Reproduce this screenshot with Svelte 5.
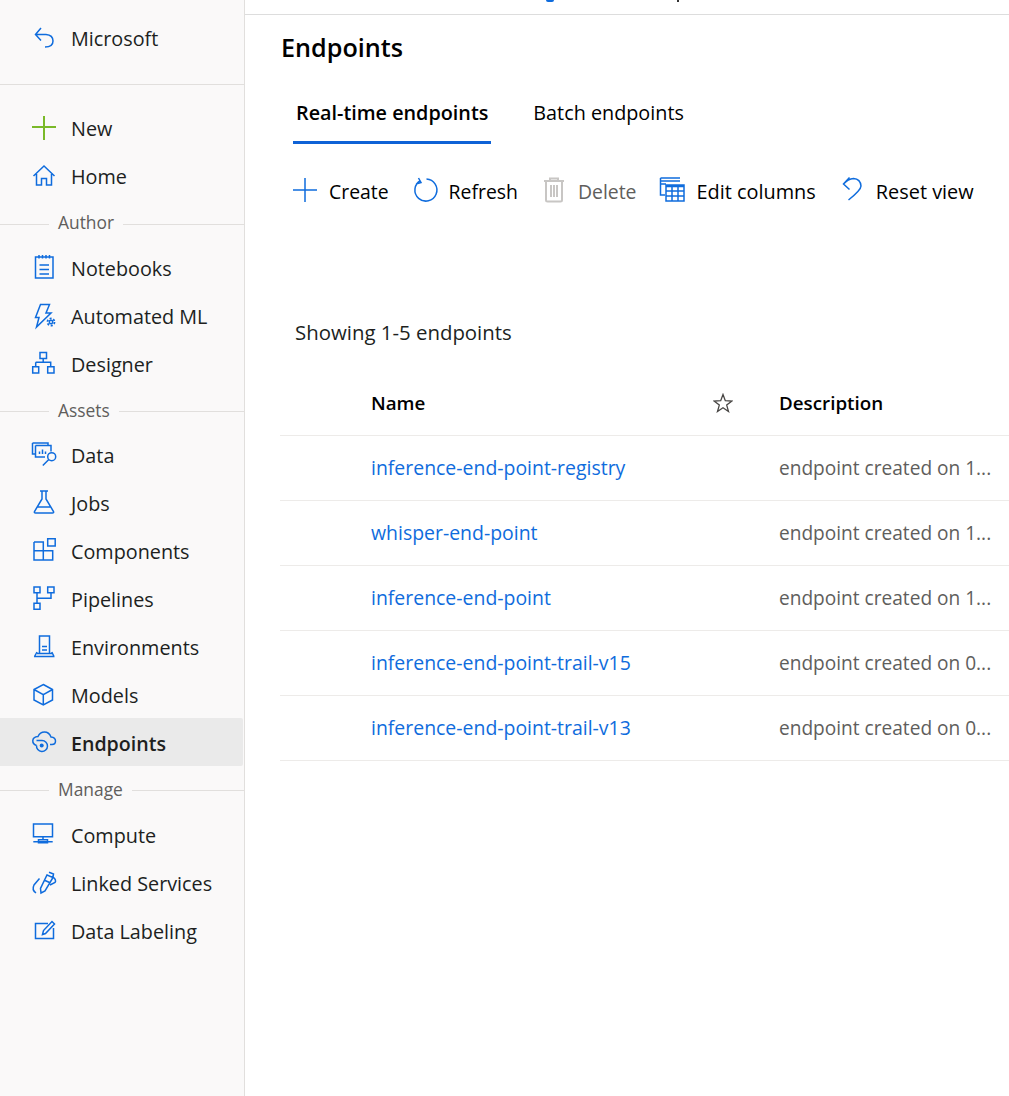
<script lang="ts">
	const groups = [
		{ label: 'Author', h: 44, items: ['Notebooks', 'Automated ML', 'Designer'] },
		{ label: 'Assets', h: 43, items: ['Data', 'Jobs', 'Components', 'Pipelines', 'Environments', 'Models', 'Endpoints'] },
		{ label: 'Manage', h: 45, items: ['Compute', 'Linked Services', 'Data Labeling'] }
	];

	const icons: Record<string, string> = {
		Home: 'M1.500 12 12 2l10.500 10M4.500 10v11h5v-6.500h5V21h5V10',
		Notebooks: 'M3.500 1h17.500v21H3.500zM7 -1v3.500M10.500 -1v3.500M14 -1v3.500M17.500 -1v3.500M7.500 9H17M7.500 13.500H17M7.500 18H17',
		'Automated ML': 'M8.500 .5h9L14 9h5L4.500 23 7 13.500H3.500z',
		Designer: 'M8 .5h6.500v6H8zM11.200 6.500v4M3.700 10.300h15v4.400M3.700 10.300v4.400M.7 14.700h6v6.300h-6zM15.700 14.700H22v6.300h-6.300z',
		Data: 'M.5 0H16v2M.5 0v11H3M3.500 2.500H19v6M3.500 2.500V14H13M7.500 11V8.500M10.500 11V6.500M13.500 11V8.500M16.800 16.500l-6 6',
		Jobs: 'M8 0h8M10 0v8L2.500 20.500Q2 22 3.500 22h17q1.500 0 1-1.500L14 8V0M5.500 16h13',
		Components: 'M2 3h9.300v18M2 3v18h18.700v-9.300H2M15.700 -.2h7.500V7h-7.500z',
		Pipelines: 'M2 0h6v5.700H2zM15.700 0H22v5.700h-6.300zM2 16.300h6v6H2zM5 5.700v10.600M5 11.300h14V5.700',
		Environments: 'M7.500 18V1h10v17M2 21.500h20.500M5 17 2.500 21.500M5 18.500h15M19.800 17l2.200 4.500M10 11.500h5M10 15h5',
		Models: 'M11.300 1.500 20.500 6.500V17l-9.200 5L2 17V6.500zM2 6.500l9.300 5.200 9.200-5.200M11.300 11.700V22',
		Compute: 'M1.500 1h19v12.700h-19zM11 13.700v3M6.500 16.700h9v3h-9zM1.300 18.700h19.400',
		'Linked Services': 'M15 4l6 2.500L13 20l-4 2-.5-4.500zM17 1.200 21.500 3 21 6.500M12 9l5.500 2.500M7.500 7.500 2 14Q-.5 19 4 22M20 5q5 4 3 6.500L18 14',
		'Data Labeling': 'M16 4.500H3.500v15h18V9M10.500 15.500l1-4L20 2.500 22.500 5l-9 9.500z'
	};

	const rows = [
		['inference-end-point-registry', 'endpoint created on 1...'],
		['whisper-end-point', 'endpoint created on 1...'],
		['inference-end-point', 'endpoint created on 1...'],
		['inference-end-point-trail-v15', 'endpoint created on 0...'],
		['inference-end-point-trail-v13', 'endpoint created on 0...']
	];
</script>

<div class="page">
	<aside class="side">
		<div class="back">
			<svg class="ico" viewBox="0 0 24 24"><path d="M9 2 3.500 8.500 9 14.500M3.500 8.500H14q7 .5 7 6.500t-8 6" /></svg>
			<span>Microsoft</span>
		</div>
		<div class="nav-row new">
			<svg class="ico" viewBox="0 0 24 24"><path class="plus" d="M12 0v24M0 11h24" /></svg>
			<span>New</span>
		</div>
		<div class="nav-row">
			<svg class="ico" viewBox="0 0 24 24"><path d={icons.Home} /></svg>
			<span>Home</span>
		</div>
		{#each groups as group}
			<div class="section" style="height: {group.h}px">
				<span>{group.label}</span>
			</div>
			{#each group.items as item}
				<div class="nav-row" class:active={item === 'Endpoints'}>
					{#if item === 'Endpoints'}
						<svg class="ico" viewBox="0 0 24 24">
							<path d="M4.500 14.500Q.5 13 .8 9.500T6 5.500Q8 1 12.500 1T19 6q4.500.5 4.500 4T20 13.500h-2M4.500 9.500H10a5.500 5.500 0 1 1-5.500 5" />
							<circle cx="9.700" cy="14.500" r="2" class="dot" />
						</svg>
					{:else}
						<svg class="ico" viewBox="0 0 24 24">
							<path d={icons[item]} />
							{#if item === 'Automated ML'}
								<circle cx="19" cy="18" r="1.700" />
								<circle cx="19" cy="18" r="3.500" class="gear" />
							{:else if item === 'Data'}
								<circle cx="19.700" cy="13.700" r="4" />
							{/if}
						</svg>
					{/if}
					<span>{item}</span>
				</div>
			{/each}
		{/each}
	</aside>

	<main class="main">
		<div class="crumbs"><i class="crumb-a"></i><i class="crumb-b"></i></div>
		<h1>Endpoints</h1>
		<div class="tabs">
			<div class="tab current">Real-time endpoints</div>
			<div class="tab">Batch endpoints</div>
		</div>
		<div class="toolbar">
			<div class="tool first">
				<svg viewBox="0 0 24 24"><path d="M12 0v24M0 12h24" /></svg>
				<span>Create</span>
			</div>
			<div class="tool">
				<svg viewBox="0 0 24 24"><path d="M7.500 2.500a11 11 0 1 0 6-1.400M5.500 0l2.500 4.500-5 1.500" /></svg>
				<span>Refresh</span>
			</div>
			<div class="tool off">
				<svg viewBox="0 0 24 24"><path d="M2 3h20M8 3V.5h8V3M4 3v19q0 1.500 1.500 1.500h13q1.500 0 1.500-1.500V3M9 7v12M12 7v12M15 7v12" /></svg>
				<span>Delete</span>
			</div>
			<div class="tool wide">
				<svg viewBox="0 0 24 24"><path d="M.5 0H20M.5 3H20M.5 6H6M.5 0v17H5M6 7h18v16H6zM6 8.500h18M6 13h18M6 18h18M12 7v16M18 7v16" /></svg>
				<span>Edit columns</span>
			</div>
			<div class="tool wide">
				<svg viewBox="0 0 24 24"><path d="M9.500 -.5 3.500 6l6 5.500M3.500 6Q8 1 13.500 .5 20.500 1 21 8q0 4-12.500 14" /></svg>
				<span>Reset view</span>
			</div>
		</div>
		<div class="count">Showing 1-5 endpoints</div>
		<div class="table">
			<div class="head">
				<span class="col-name">Name</span>
				<span class="col-star">
					<svg viewBox="0 0 20 20"><path d="M10 1.500 12.300 7.700 18.900 8 13.700 12.100 15.500 18.500 10 14.800 4.500 18.500 6.300 12.100 1.100 8 7.700 7.700Z" /></svg>
				</span>
				<span class="col-desc">Description</span>
			</div>
			{#each rows as row}
				<div class="row">
					<span class="col-name link">{row[0]}</span>
					<span class="col-star"></span>
					<span class="col-desc">{row[1]}</span>
				</div>
			{/each}
		</div>
	</main>
</div>

<style>
	:global(body) {
		margin: 0;
		overflow: hidden;
	}

	.page {
		display: flex;
		width: 1009px;
		height: 1096px;
		overflow: hidden;
		background: #fff;
		font-family: "Open Sans", "Noto Sans", sans-serif;
		font-size: 19.800px;
		color: #201f1e;
	}

	.side {
		width: 244px;
		flex-shrink: 0;
		background: #faf9f9;
		border-right: 1px solid #e1dfdd;
	}

	.back {
		display: flex;
		align-items: center;
		height: 85px;
		padding: 0 0 8px 32px;
		box-sizing: border-box;
		border-bottom: 1px solid #e1dfdd;
		margin-bottom: 19px;
	}

	.nav-row {
		display: flex;
		align-items: center;
		height: 48px;
		padding-left: 32px;
		margin-right: 1px;
		border-radius: 0 2px 2px 0;
	}

	.nav-row.active {
		height: 46px;
		margin-top: -1px;
		padding-top: 2px;
		background: #eaeaea;
		font-weight: 600;
		font-size: 19.600px;
	}

	.ico {
		width: 24px;
		height: 24px;
		margin-right: 15px;
		flex-shrink: 0;
		overflow: visible;
		fill: none;
		stroke: #0f6cdd;
		stroke-width: 1.500;
	}

	.plus {
		stroke: #7ab929;
		stroke-width: 2;
	}

	.dot {
		fill: #0f6cdd;
		stroke: none;
	}

	.gear {
		stroke-width: 1.800;
		stroke-dasharray: 2 1.670;
	}

	.section {
		display: flex;
		align-items: center;
		gap: 9px;
		box-sizing: border-box;
		font-size: 17.400px;
		color: #605e5c;
	}

	.section::before,
	.section::after {
		content: '';
		height: 1px;
		margin-top: 4px;
		background: #e1dfdd;
	}

	.section::before {
		width: 49px;
	}

	.section::after {
		flex: 1;
	}

	.main {
		flex: 1;
		min-width: 0;
	}

	.crumbs {
		display: flex;
		height: 14px;
		border-bottom: 1px solid #dddddd;
		margin-bottom: 14px;
	}

	.crumb-a {
		width: 8px;
		height: 2px;
		margin-left: 301px;
		border-radius: 0 0 4px 4px;
		background: #0f6cdd;
	}

	.crumb-b {
		width: 2px;
		height: 2px;
		margin-left: 123px;
		background: #333;
	}

	h1 {
		margin: 0 0 0 36px;
		font-size: 25.200px;
		font-weight: 600;
		line-height: 36px;
		color: #000;
	}

	.tabs {
		display: flex;
		gap: 39px;
		margin: 23px 0 0 48px;
	}

	.tab {
		height: 56px;
		line-height: 50px;
		padding: 0 3px;
		box-sizing: border-box;
		color: #000;
	}

	.tab.current {
		font-weight: 600;
		border-bottom: 3px solid #0f62d6;
	}

	.toolbar {
		display: flex;
		align-items: center;
		height: 48px;
		margin: 23px 0 0 48px;
		gap: 24px;
		font-size: 19.400px;
		color: #000;
	}

	.tool {
		display: flex;
		align-items: center;
		gap: 12px;
	}

	.tool.wide {
		font-size: 19.900px;
	}

	.tool svg {
		width: 24px;
		height: 24px;
		margin-top: -2px;
		overflow: visible;
		fill: none;
		stroke: #0f6cdd;
		stroke-width: 1.500;
	}

	.tool.off {
		color: #605e5c;
	}

	.tool.off svg {
		stroke: #c8c6c4;
		stroke-width: 2;
	}

	.count {
		margin: 102px 0 0 50px;
		font-size: 20.400px;
		line-height: 30px;
		color: #201f1e;
	}

	.table {
		margin: 24px 0 0 35px;
	}

	.head,
	.row {
		display: flex;
		align-items: center;
		height: 65px;
		box-sizing: border-box;
		border-bottom: 1px solid #edebe9;
		padding-left: 91px;
	}

	.row {
		padding-bottom: 2px;
		font-size: 19.100px;
	}

	.head {
		font-weight: 600;
		font-size: 18.800px;
		color: #000;
	}

	.col-name {
		width: 342px;
		flex-shrink: 0;
	}

	.row .col-name {
		font-size: 19.450px;
	}

	.col-star {
		width: 66px;
		flex-shrink: 0;
		display: flex;
	}

	.col-star svg {
		width: 20px;
		height: 20px;
		fill: none;
		stroke: #484644;
		stroke-width: 1.300;
	}

	.link {
		color: #0f6cdd;
	}

	.row .col-desc {
		padding-top: 2px;
		color: #605e5c;
	}
</style>
